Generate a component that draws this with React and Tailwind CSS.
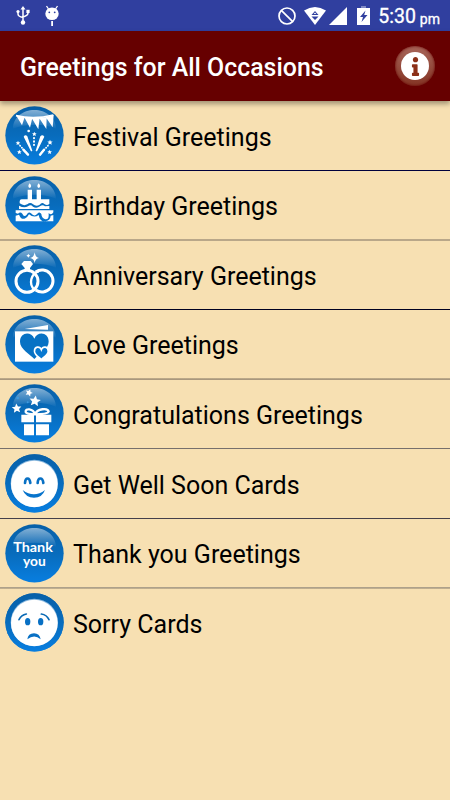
import { FaInfo } from "react-icons/fa";

const GREETINGS = [
  { id: "festival", label: "Festival Greetings", Icon: FestivalIcon, row: "h-[70px]", line: "h-px bg-[#00003c]" },
  { id: "birthday", label: "Birthday Greetings", Icon: BirthdayIcon, row: "h-[69px]", line: "h-0.5 -mb-px bg-[#b9a789]" },
  { id: "anniversary", label: "Anniversary Greetings", Icon: RingsIcon, row: "h-[70px]", line: "h-px bg-[#000020]" },
  { id: "love", label: "Love Greetings", Icon: LoveIcon, row: "h-[69px]", line: "h-0.5 -mb-px bg-linear-to-b from-[#c4b18e] to-[#a09078]" },
  { id: "congratulations", label: "Congratulations Greetings", Icon: GiftIcon, row: "h-[70px]", line: "h-px bg-[#77706c]" },
  { id: "getwell", label: "Get Well Soon Cards", Icon: SmileIcon, row: "h-[70px]", line: "h-px bg-[#45404a]" },
  { id: "thanks", label: "Thank you Greetings", Icon: ThanksIcon, row: "h-[69px]", line: "h-0.5 -mb-px bg-linear-to-b from-[#a59a88] to-[#c8b592]" },
  { id: "sorry", label: "Sorry Cards", Icon: SadIcon, row: "h-[70px]", line: "h-px" },
];

const STAR =
  "M0 -10 L3 -3.4 L10 -3 L4.8 1.6 L6.4 8.6 L0 5 L-6.4 8.6 L-4.8 1.6 L-10 -3 L-3 -3.4 Z";

function Star({ x, y, size = 1, turn = 0 }) {
  return (
    <path
      d={STAR}
      fill="#fff"
      transform={`translate(${x} ${y}) rotate(${turn}) scale(${size})`}
    />
  );
}

// Glossy blue button that every list icon is drawn on.
function Badge({ id, children }) {
  return (
    <svg viewBox="0 0 177 177" className="size-[59px] shrink-0">
      <defs>
        <linearGradient id={`${id}-base`} x1="0" y1="0" x2="0" y2="1">
          <stop offset="0" stopColor="#0860a8" />
          <stop offset="0.5" stopColor="#086cbc" />
          <stop offset="1" stopColor="#087ee0" />
        </linearGradient>
        <linearGradient id={`${id}-gloss`} x1="0" y1="0" x2="0" y2="1">
          <stop offset="0" stopColor="#fff" stopOpacity="0.5" />
          <stop offset="1" stopColor="#fff" stopOpacity="0.02" />
        </linearGradient>
      </defs>
      <circle cx="88.5" cy="88" r="87.5" fill={`url(#${id}-base)`} />
      <path
        d="M24 68 C24 34 54 12 88 12 C122 12 152 34 153 68 C118 52 62 52 24 68 Z"
        fill={`url(#${id}-gloss)`}
      />
      {children}
    </svg>
  );
}

function FestivalIcon() {
  return (
    <Badge id="festival">
      <path d="M33 29 Q88 42 145 27" fill="none" stroke="#fff" strokeWidth="5" />
      <path
        d="M34 29 L59 34 L51 58 Z M58 34 L82 36 L75 65 Z M80 36 L104 35 L100 70 Z M102 35 L125 33 L124 69 Z M122 33 L146 27 L143 64 Z"
        fill="#fff"
      />
      <path
        d="M56 92 Q61 84 67 91 L82 134 Q80 138 77 134 Z M118 92 Q112 84 106 91 L92 134 Q94 138 97 134 Z"
        fill="#fff"
      />
      <g stroke="#fff" strokeLinecap="round" fill="none">
        <path d="M87 96 V124" strokeWidth="6" strokeDasharray="1 9" />
        <path d="M45 119 L67 143 M129 119 L107 143" strokeWidth="5" strokeDasharray="1 7" />
        <path d="M55 131 L69 146 M117 131 L105 146" strokeWidth="7" />
      </g>
      <circle cx="71" cy="75" r="4" fill="#fff" />
      <Star x={88} y={84} size={0.7} />
      <Star x={39} y={111} size={0.7} />
      <Star x={135} y={109} size={0.8} />
      <Star x={43} y={138} size={0.7} />
      <Star x={134} y={138} size={0.7} />
    </Badge>
  );
}

function BirthdayIcon() {
  return (
    <Badge id="birthday">
      <g fill="#fff">
        <path d="M74 22 Q83 32 74 36 Q66 32 74 22 Z M101 22 Q110 32 101 36 Q93 32 101 22 Z" />
        <path d="M68 41 H81 V70 H95 V41 H108 V70 H133 V84 Q126 90 118 84 Q111 77 104 86 Q94 93 84 85 Q76 77 67 85 Q56 91 44 82 V76 Q44 70 50 70 H68 Z" />
        <path d="M42 89 Q57 98 69 91 Q77 84 84 92 Q94 99 105 91 Q113 84 120 91 L133 90 V99 H42 Z" />
        <path d="M32 103 H145 V109 Q139 119 131 111 V120 Q130 132 119 129 Q110 126 109 114 Q104 105 97 113 Q88 124 78 112 Q71 105 65 116 Q57 125 52 113 Q46 106 39 113 L32 111 Z" />
        <path d="M32 119 L42 116 Q49 133 61 127 Q68 123 72 115 Q87 127 101 117 Q105 138 120 136 Q136 134 137 119 L145 117 V136 H32 Z" />
      </g>
    </Badge>
  );
}

function RingsIcon() {
  return (
    <Badge id="rings">
      <g fill="none" stroke="#fff" strokeWidth="9">
        <circle cx="66" cy="109" r="33" />
        <path d="M92 81 A33 33 0 1 1 92 135" />
        <path d="M88 134 A33 33 0 0 1 101 79" strokeWidth="7" />
      </g>
      <path d="M57 48 H77 L84 57 L75 69 V77 H59 V69 L49 57 Z" fill="#fff" />
      <path d="M89 22 Q91 37 102 39 Q91 41 89 54 Q87 41 75 39 Q87 37 89 22 Z" fill="#fff" />
      <path d="M70 26 Q71 31 76 32 Q71 33 70 38 Q69 33 64 32 Q69 31 70 26 Z" fill="#fff" />
    </Badge>
  );
}

function LoveIcon() {
  const heart =
    "M0 34 C-12 21 -43 7 -43 -14 C-43 -40 -10 -44 0 -22 C10 -44 43 -40 43 -14 C43 7 12 21 0 34 Z";
  return (
    <Badge id="love">
      <path d="M59 42 L129 30 V44 Z" fill="#fff" />
      <rect x="30" y="49" width="115" height="91" fill="#fff" />
      <path d={heart} fill="#0872c4" transform="translate(88 95) scale(1 1.08)" />
      <path
        d={heart}
        fill="#0878d0"
        stroke="#fff"
        strokeWidth="10"
        transform="translate(109 116) scale(0.48 0.54)"
      />
    </Badge>
  );
}

function GiftIcon() {
  return (
    <Badge id="gift">
      <Star x={72} y={26} size={1.1} turn={20} />
      <Star x={90} y={51} size={1.7} turn={8} />
      <Star x={35} y={73} size={1.45} turn={-5} />
      <circle cx="38" cy="42" r="4" fill="#3d9ae0" />
      <circle cx="68" cy="55" r="3" fill="#3d9ae0" />
      <g fill="#fff">
        <path d="M49 92 H87 V115 H49 Z M93 92 H139 V115 H93 Z" />
        <path d="M57 121 H87 V154 H57 Z M93 121 H132 V154 H93 Z" />
      </g>
      <path
        d="M90 91 C84 73 60 72 62 84 Q65 91 90 91 C96 73 129 71 131 83 Q128 91 90 91"
        fill="none"
        stroke="#fff"
        strokeWidth="7"
      />
    </Badge>
  );
}

function Face({ id, children }) {
  return (
    <Badge id={id}>
      <circle cx="88.5" cy="88" r="87.5" fill={`url(#${id}-base)`} />
      <circle cx="88" cy="88" r="71" fill="#8ab8de" />
      <circle cx="88" cy="90" r="70" fill="#fff" />
      {children}
    </Badge>
  );
}

function SmileIcon() {
  return (
    <Face id="smile">
      <g fill="none" stroke="#0870c4" strokeWidth="8" strokeLinecap="round">
        <path d="M60 87 C61 69 74 69 76 87" />
        <path d="M98 87 C99 69 113 69 115 87" />
      </g>
      <path d="M53 108 Q87 134 120 108 Q112 131 87 131 Q62 131 53 108 Z" fill="#0874cc" />
    </Face>
  );
}

function ThanksIcon() {
  return (
    <Badge id="thanks">
      <g
        fill="#fff"
        textAnchor="middle"
        fontFamily="Lato, sans-serif"
        fontSize="42"
        fontWeight="700"
      >
        <text x="84" y="83" textLength="119" lengthAdjust="spacingAndGlyphs">Thank</text>
        <text x="88" y="127" textLength="68" lengthAdjust="spacingAndGlyphs">you</text>
      </g>
    </Badge>
  );
}

function SadIcon() {
  return (
    <Face id="sad">
      <g fill="#0870c4">
        <ellipse cx="68" cy="86" rx="8" ry="11" />
        <ellipse cx="107" cy="86" rx="8" ry="11" />
        <path d="M67 139 Q69 121 87 121 Q104 121 107 139 Q88 122 67 139 Z" />
      </g>
      <g fill="none" stroke="#0868b4" strokeWidth="5" strokeLinecap="round">
        <path d="M42 80 Q49 66 64 63" />
        <path d="M109 63 Q125 65 132 80" />
      </g>
    </Face>
  );
}

function StatusBar() {
  return (
    <div className="flex h-[31px] items-center bg-[#303f9f] text-white">
      <svg viewBox="0 0 14 19" className="ml-4 h-[19px] w-3.5" fill="none" stroke="#fff">
        <path d="M7 2 V15 M2 6 V8 Q2 10.500 7 11.500 M12 6 V7 Q12 9.500 7 11" strokeWidth="1.500" />
        <path d="M7 0 L9.500 3.500 H4.500 Z" fill="#fff" stroke="none" />
        <circle cx="7" cy="16.500" r="2.200" fill="#fff" stroke="none" />
        <circle cx="2" cy="5.500" r="1.600" fill="#fff" stroke="none" />
        <rect x="10.400" y="3.800" width="3.200" height="3.200" fill="#fff" stroke="none" />
      </svg>
      <svg viewBox="0 0 16 21" className="ml-3.5 h-[21px] w-4" fill="#fff">
        <path d="M2.500 1 L4.500 4 M13.500 1 L11.500 4" stroke="#fff" strokeWidth="1.300" />
        <ellipse cx="8" cy="8.700" rx="6.700" ry="6.300" />
        <circle cx="5.300" cy="7.300" r="0.900" fill="#303f9f" />
        <circle cx="10.700" cy="7.300" r="0.900" fill="#303f9f" />
        <rect x="7.200" y="16" width="1.800" height="5" />
      </svg>

      <div className="ml-auto flex items-center pr-2.5">
        <svg viewBox="0 0 18 18" className="size-[18px]" fill="none" stroke="#fff" strokeWidth="1.700">
          <circle cx="9" cy="9" r="8" />
          <path d="M3.300 3.300 L14.700 14.700" />
        </svg>
        <svg viewBox="0 0 22 18" className="ml-2 h-[18px] w-[22px]">
          <path d="M0 3.500 Q11 -3.500 22 3.500 L11 18 Z" fill="#fff" />
          <path d="M7.500 8 L11 4 L14.500 8 Z M7.500 9.500 H14.500 L11 13 Z" fill="#303f9f" />
          <path d="M9.700 7 H12.300 L11 5.500 Z" fill="#fff" />
        </svg>
        <svg viewBox="0 0 18 18" className="ml-[3px] size-[18px]">
          <path d="M18 0 V18 H0 Z" fill="#fff" />
        </svg>
        <svg viewBox="0 0 13 19" className="ml-2.5 h-[19px] w-[13px]">
          <path d="M4 0 H9 V2 H4 Z" fill="#fff" fillOpacity="0.4" />
          <path d="M0 2 H13 V19 H0 Z" fill="#fff" />
          <path d="M8.500 4.500 L3 11 H6 L4.500 16 L10.500 9 H7.200 Z" fill="#303f9f" />
        </svg>
        <span className="ml-2 pt-0.5 text-[19.5px] leading-none [-webkit-text-stroke:0.3px_white]">5:30</span>
        <span className="ml-1 pt-1.5 text-[14px] leading-none [-webkit-text-stroke:0.3px_white]">pm</span>
      </div>
    </div>
  );
}

function AppBar() {
  return (
    <header className="relative flex h-[70px] items-center justify-between bg-[#660000] pr-[15px] pl-5 shadow-[0_3px_5px_rgba(0,0,0,0.35)]">
      <h1 className="pt-1 text-[24.9px] leading-none font-medium whitespace-nowrap text-white">
        Greetings for All Occasions
      </h1>
      <div className="flex size-10 items-center justify-center rounded-full bg-linear-to-b from-[#a8665a] to-[#843424] p-[6px] shadow-[inset_0_0_3px_#660000]">
        <div className="flex size-7 items-center justify-center rounded-full bg-white">
          <FaInfo className="size-[19px] text-[#8c3018]" />
        </div>
      </div>
    </header>
  );
}

export default function App() {
  return (
    <div className="min-h-screen w-[450px] overflow-hidden bg-[#f7e0b2] font-[Roboto,sans-serif]">
      <StatusBar />
      <AppBar />
      <ul>
        {GREETINGS.map(({ id, label, Icon, row, line }) => (
          <li key={id} className={`flex flex-col ${row}`}>
            <div className="flex min-h-0 flex-1 items-center pl-[5px]">
              <Icon />
              <span className="ml-[9px] pt-[3.5px] text-[25px] leading-none whitespace-nowrap text-black">
                {label}
              </span>
            </div>
            <div className={`relative shrink-0 ${line}`} />
          </li>
        ))}
      </ul>
    </div>
  );
}
